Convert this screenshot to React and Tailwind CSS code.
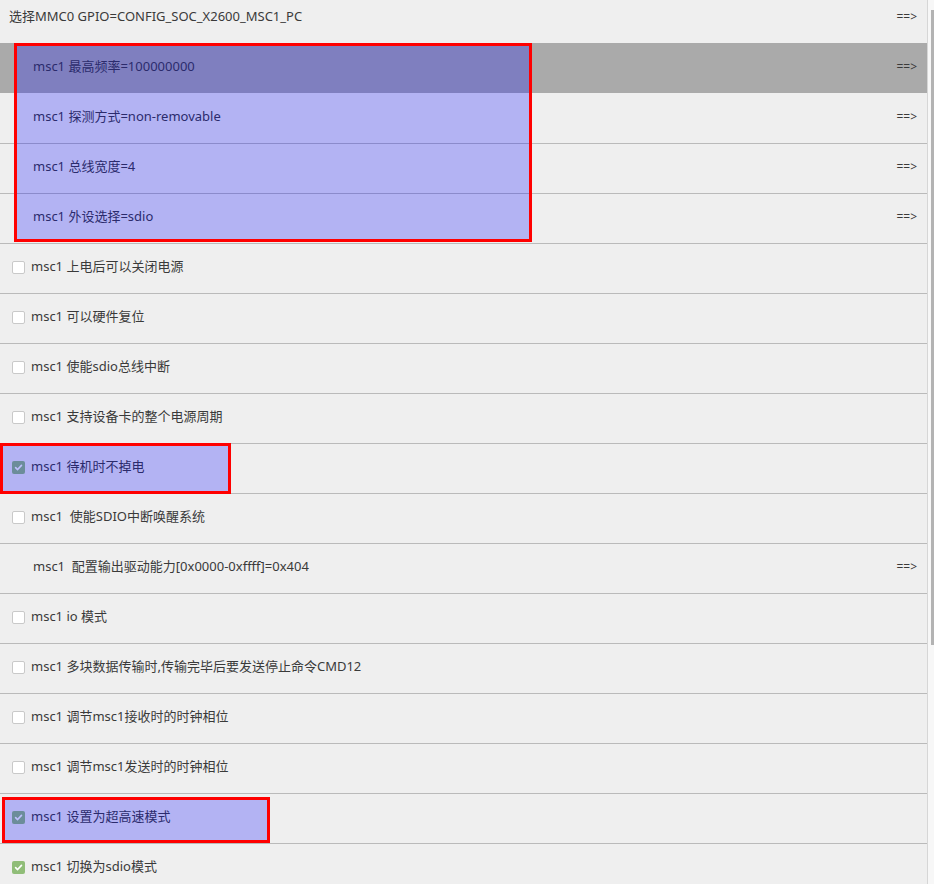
import React from 'react'

const rows = [
  { label: '选择MMC0 GPIO=CONFIG_SOC_X2600_MSC1_PC', type: 'menu', indent: 'pl-[9px]' },
  { label: 'msc1 最高频率=100000000', type: 'menu', selected: true },
  { label: 'msc1 探测方式=non-removable', type: 'menu' },
  { label: 'msc1 总线宽度=4', type: 'menu' },
  { label: 'msc1 外设选择=sdio', type: 'menu' },
  { label: 'msc1 上电后可以关闭电源', type: 'check' },
  { label: 'msc1 可以硬件复位', type: 'check' },
  { label: 'msc1 使能sdio总线中断', type: 'check' },
  { label: 'msc1 支持设备卡的整个电源周期', type: 'check' },
  { label: 'msc1 待机时不掉电', type: 'check', checked: true },
  { label: 'msc1  使能SDIO中断唤醒系统', type: 'check' },
  { label: 'msc1  配置输出驱动能力[0x0000-0xffff]=0x404', type: 'menu' },
  { label: 'msc1 io 模式', type: 'check' },
  { label: 'msc1 多块数据传输时,传输完毕后要发送停止命令CMD12', type: 'check' },
  { label: 'msc1 调节msc1接收时的时钟相位', type: 'check' },
  { label: 'msc1 调节msc1发送时的时钟相位', type: 'check' },
  { label: 'msc1 设置为超高速模式', type: 'check', checked: true },
  { label: 'msc1 切换为sdio模式', type: 'check', checked: true },
]

const CheckBox = ({ checked }) =>
  checked ? (
    <span className="w-[13px] h-[13px] rounded-[2px] bg-[#90bd78] flex items-center justify-center shrink-0">
      <svg width="9" height="9" viewBox="0 0 10 10" fill="none">
        <path d="M1.8 5.2 L4 7.3 L8.3 2.6" stroke="#fff" strokeWidth="1.8" strokeLinecap="round" strokeLinejoin="round" />
      </svg>
    </span>
  ) : (
    <span className="w-[13px] h-[13px] rounded-[2px] bg-white border border-[#c9c9c9] shrink-0"></span>
  )

const Row = ({ row, idx }) => (
  <div
    className={`h-[50px] flex items-center pr-[10px] pb-[3px] ${idx > 2 ? 'border-t border-[#bababa]' : ''} ${
      row.selected ? 'bg-[#aaaaaa]' : 'bg-[#efefef]'
    }`}
  >
    {row.type === 'check' ? (
      <div className="flex items-center gap-[6px] pl-[12px]">
        <CheckBox checked={row.checked} />
        <span className="whitespace-pre">{row.label}</span>
      </div>
    ) : (
      <span className={`whitespace-pre ${row.indent || 'pl-[33px]'}`}>{row.label}</span>
    )}
    {row.type === 'menu' && <span className="ml-auto text-[12px]">==&gt;</span>}
  </div>
)

const App = () => (
  <div
    className="relative w-[934px] h-[884px] overflow-hidden bg-[#efefef] flex text-[13px] text-[#3a3a3a]"
    style={{ fontFamily: '"Noto Sans", "Noto Sans CJK SC", sans-serif' }}
  >
    <div className="flex-1 -mt-[7px]">
      {rows.map((row, idx) => (
        <Row key={idx} row={row} idx={idx} />
      ))}
    </div>
    <div className="w-[7px] border-l border-[#d6d6d6] bg-[#f7f7f7] flex justify-end">
      <div className="w-[3px] mt-[10px] h-[635px] bg-[#b3b3b3]"></div>
    </div>

    {/* annotation boxes */}
    <div className="absolute left-[14px] top-[43px] w-[518px] h-[199px] border-[3px] border-[#ff0000]">
      <div className="w-full h-full bg-[rgba(0,0,255,0.25)]"></div>
    </div>
    <div className="absolute left-0 top-[443px] w-[231px] h-[51px] border-[3px] border-[#ff0000]">
      <div className="w-full h-full bg-[rgba(0,0,255,0.25)]"></div>
    </div>
    <div className="absolute left-[2px] top-[797px] w-[268px] h-[46px] border-[3px] border-[#ff0000]">
      <div className="w-full h-full bg-[rgba(0,0,255,0.25)]"></div>
    </div>
  </div>
)

export default App
